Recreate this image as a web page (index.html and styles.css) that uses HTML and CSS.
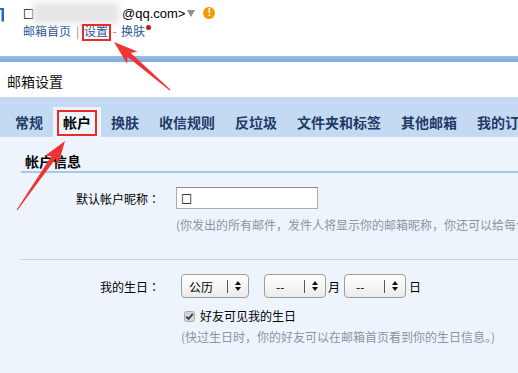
FILE: index.html
```html
<!DOCTYPE html>
<html lang="zh-CN">
<head>
<meta charset="utf-8">
<title>邮箱设置</title>
<link rel="stylesheet" href="styles.css">
</head>
<body>
<div class="page">
  <header class="top">
    <svg class="logo" width="4" height="56" viewBox="0 0 4 56"><path d="M0 8h4v13.5H1.5V10H0z" fill="#1d6cc2"/></svg>
    <div class="acct">
      <div class="line1">
        <span class="sq">□</span><span class="blur"></span><span class="mail">@qq.com&gt;</span>
        <svg class="tri" width="8" height="8" viewBox="0 0 8 8"><path d="M0 1h8L4 8z" fill="#8a8f96"/></svg>
        <span class="warn">!</span>
      </div>
      <div class="line2">
        <a class="lnk">邮箱首页</a><span class="sep">|</span><a class="lnk mark">设置</a><span class="sep">-</span><a class="lnk">换肤</a><span class="dot"></span>
      </div>
    </div>
  </header>
  <div class="bar"></div>
  <h1 class="title">邮箱设置</h1>
  <nav class="tabs">
    <span class="tab">常规</span>
    <span class="tab on"><span class="boxed">帐户</span></span>
    <span class="tab">换肤</span>
    <span class="tab">收信规则</span>
    <span class="tab">反垃圾</span>
    <span class="tab">文件夹和标签</span>
    <span class="tab">其他邮箱</span>
    <span class="tab">我的订阅</span>
  </nav>
  <main class="content">
    <h2 class="sec">帐户信息</h2>
    <div class="row">
      <span class="lbl">默认帐户昵称<span class="colon" lang="zh-TW">：</span></span>
      <div class="input">□</div>
    </div>
    <div class="hint">(你发出的所有邮件，发件人将显示你的邮箱昵称，你还可以给每个帐户设置不同的昵称。)</div>
    <div class="hr"></div>
    <div class="row">
      <span class="lbl">我的生日<span class="colon" lang="zh-TW">：</span></span>
      <div class="sel first"><span class="sv">公历</span><span class="sdiv"></span><span class="sarr"><svg width="6" height="10" viewBox="0 0 6 10"><path d="M3 0L6 4H0zM0 6h6L3 10z" fill="#111"/></svg></span></div>
      <div class="sel dash"><span class="sv">--</span><span class="sdiv"></span><span class="sarr"><svg width="6" height="10" viewBox="0 0 6 10"><path d="M3 0L6 4H0zM0 6h6L3 10z" fill="#111"/></svg></span></div>
      <span class="unit">月</span>
      <div class="sel dash2"><span class="sv">--</span><span class="sdiv"></span><span class="sarr"><svg width="6" height="10" viewBox="0 0 6 10"><path d="M3 0L6 4H0zM0 6h6L3 10z" fill="#111"/></svg></span></div>
      <span class="unit last">日</span>
    </div>
    <div class="chk">
      <svg class="cbox" width="11" height="11" viewBox="0 0 11 11"><rect x="0.5" y="0.5" width="10" height="10" rx="2" fill="#d6d6d6" stroke="#a9a9a9"/><path d="M2.3 5.6l2.2 2.3 4.3-5" fill="none" stroke="#3c3c3c" stroke-width="1.8"/></svg>
      <span>好友可见我的生日</span>
    </div>
    <div class="hint hint2">(快过生日时，你的好友可以在邮箱首页看到你的生日信息。)</div>
  </main>
  <svg class="arrows" width="518" height="373" viewBox="0 0 518 373">
    <polygon points="114,42 137.4,51.5 130.8,53.1 170.3,89.6 169.7,90.4 127.6,56.9 127,63.7" fill="#ef3434"/>
    <polygon points="65,141 57.9,165.3 55.7,158.8 17.4,210.3 16.6,209.7 51.5,156 44.7,156.1" fill="#ef3434"/>
  </svg>
</div>
</body>
</html>
```
FILE: styles.css
```css
body {
  margin: 0;
  background: #fff;
  font-family: "Noto Sans CJK SC", sans-serif;
}
.page {
  position: relative;
  width: 518px;
  height: 373px;
  overflow: hidden;
}
.top {
  height: 56px;
  display: flex;
}
.logo {
  flex: none;
}
.acct {
  padding: 4px 0 0 19px;
}
.line1 {
  display: flex;
  align-items: center;
  height: 18px;
  font: 13px "Liberation Sans", "DejaVu Sans", sans-serif;
  color: #000;
}
.sq {
  font-family: "DejaVu Sans", sans-serif;
  font-size: 12px;
  width: 10px;
}
.blur {
  width: 86px;
  height: 22px;
  margin: 0 3px 0 0;
  background: #e6e6e6;
  filter: blur(3px);
}
.tri {
  margin-left: 2px;
}
.warn {
  margin-left: 8px;
  width: 12px;
  height: 12px;
  border-radius: 50%;
  background: #f29a00;
  color: #fff;
  font: bold 10px/12px "Liberation Sans", sans-serif;
  text-align: center;
}
.line2 {
  display: flex;
  align-items: center;
  height: 18px;
  line-height: 18px;
  font-size: 12px;
}
.lnk {
  color: #2c5793;
}
.mark {
  position: relative;
}
.mark::after {
  content: "";
  position: absolute;
  left: -2px;
  right: -3px;
  top: 2px;
  bottom: -1px;
  border: 2px solid #ec2a2a;
}
.sep {
  width: 13px;
  text-align: center;
  color: #8a8a8a;
}
.dot {
  align-self: flex-start;
  margin: 3px 0 0 1px;
  width: 5px;
  height: 5px;
  border-radius: 50%;
  background: #c8191e;
}
.bar {
  height: 6px;
  background: linear-gradient(#9cbde9, #7fa8de);
}
.title {
  margin: 0;
  height: 32px;
  padding: 3px 0 0 7px;
  line-height: 32px;
  font-size: 14px;
  font-weight: normal;
  color: #111;
}
.tabs {
  height: 40px;
  display: flex;
  align-items: flex-end;
  padding-left: 5px;
  background: #c4daf3;
  white-space: nowrap;
  overflow: hidden;
}
.tab {
  flex: none;
  height: 30px;
  line-height: 30px;
  padding: 0 10px;
  font-size: 14px;
  font-weight: bold;
  color: #1f3b66;
}
.tab.on {
  background: #eef4fc;
  color: #000;
}
.boxed {
  position: relative;
  display: inline-block;
  line-height: 17px;
}
.boxed::after {
  content: "";
  position: absolute;
  left: -6px;
  right: -6px;
  top: -4px;
  bottom: -5px;
  border: 2px solid #ec2a2a;
}
.content {
  height: 236px;
  padding: 14px 0 0 21px;
  background: #eef4fc;
}
.sec {
  margin: 0;
  padding-left: 4px;
  line-height: 20px;
  font-size: 14px;
  font-weight: bold;
  color: #000;
  border-bottom: 2px solid #a9c6ee;
}
.row {
  display: flex;
  align-items: center;
  margin-top: 14px;
  font-size: 12px;
  color: #000;
}
.lbl {
  flex: none;
  width: 139px;
  text-align: right;
}
.colon {
  font-family: "Noto Sans CJK TC", sans-serif;
}
.input {
  box-sizing: border-box;
  margin-left: 16px;
  width: 142px;
  height: 22px;
  padding-left: 4px;
  border: 1px solid #ababab;
  border-top-color: #8a8a8a;
  background: #fff;
  font: 12px/20px "DejaVu Sans", sans-serif;
}
.hint {
  margin: 7px 0 0 155px;
  font-size: 12px;
  line-height: 18px;
  color: #8a94a6;
  white-space: nowrap;
}
.hr {
  margin-top: 25px;
  border-top: 1px solid #ccd4df;
}
.sel {
  box-sizing: border-box;
  flex: none;
  display: flex;
  align-items: center;
  height: 24px;
  border: 1px solid #9c9c9c;
  border-radius: 4px;
  background: linear-gradient(#ffffff, #ebebeb);
}
.sel.first {
  margin-left: 21px;
  width: 68px;
}
.sel.dash {
  margin-left: 15px;
  width: 62px;
}
.sel.dash2 {
  width: 62px;
}
.sv {
  flex: 1;
  padding-left: 7px;
}
.dash .sv,
.dash2 .sv {
  padding-left: 11px;
}
.sdiv {
  width: 1px;
  height: 13px;
  background: #555;
}
.sarr {
  width: 20px;
  display: flex;
  justify-content: center;
}
.unit {
  margin: 0 4px 0 2px;
}
.unit.last {
  margin: 0 0 0 3px;
}
.chk {
  display: flex;
  align-items: center;
  margin: 9px 0 0 163px;
  line-height: 18px;
  font-size: 12px;
  color: #000;
}
.cbox {
  margin-right: 5px;
}
.hint2 {
  margin: 3px 0 0 160px;
}
.arrows {
  position: absolute;
  left: 0;
  top: 0;
  pointer-events: none;
}
```
